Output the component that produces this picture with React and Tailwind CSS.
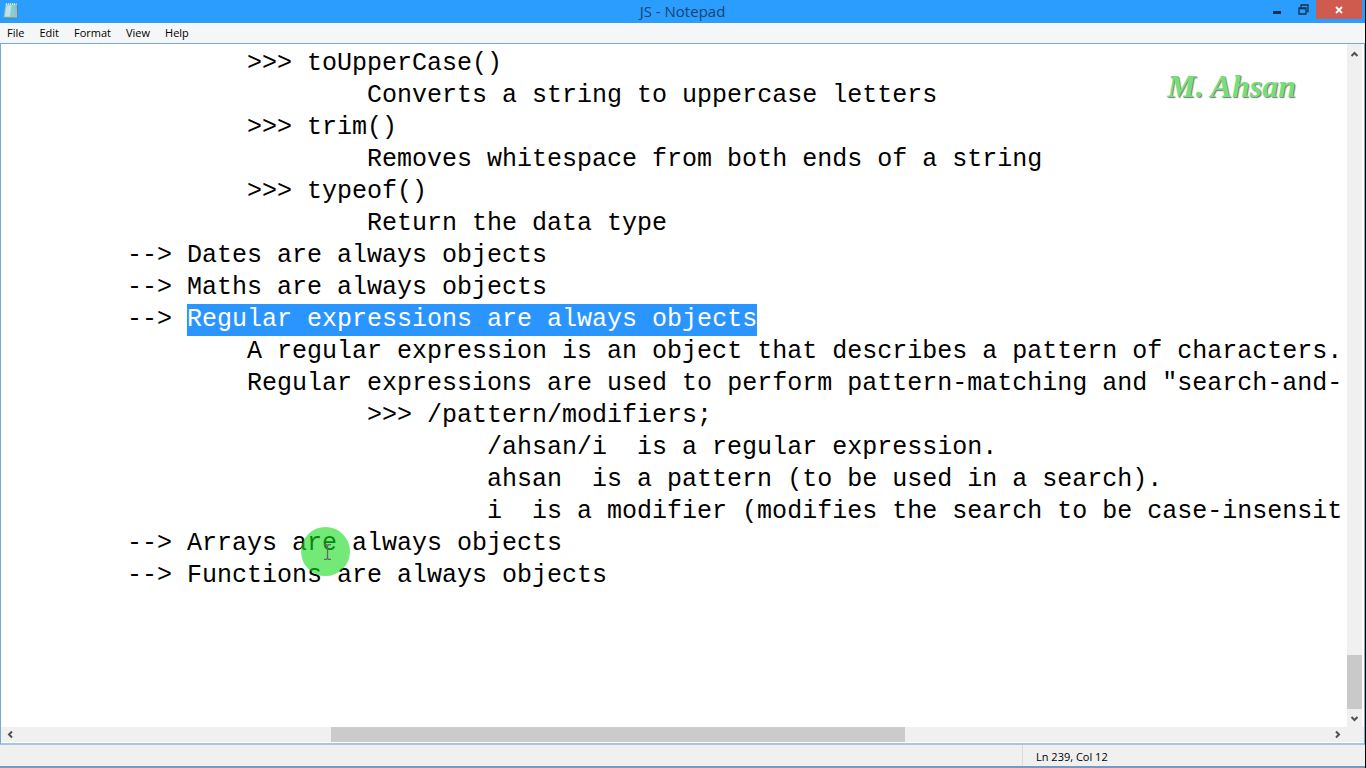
import { useEffect, useRef } from "react";

const SELECTED = "Regular expressions are always objects";

const TEXT = [
  "\t\t>>> toUpperCase()",
  "\t\t\tConverts a string to uppercase letters",
  "\t\t>>> trim()",
  "\t\t\tRemoves whitespace from both ends of a string",
  "\t\t>>> typeof()",
  "\t\t\tReturn the data type",
  "\t--> Dates are always objects",
  "\t--> Maths are always objects",
  "\t--> " + SELECTED,
  "\t\tA regular expression is an object that describes a pattern of characters.",
  "\t\tRegular expressions are used to perform pattern-matching and \"search-and-",
  "\t\t\t>>> /pattern/modifiers;",
  "\t\t\t\t/ahsan/i  is a regular expression.",
  "\t\t\t\tahsan  is a pattern (to be used in a search).",
  "\t\t\t\ti  is a modifier (modifies the search to be case-insensit",
  "\t--> Arrays are always objects",
  "\t--> Functions are always objects",
].join("\n");

const MENUS = ["File", "Edit", "Format", "View", "Help"];

const ARROWS = {
  up: "M1.5 6 4.5 3l3 3",
  down: "M1.5 3 4.5 6l3-3",
  left: "M6 1.5 3 4.5l3 3",
  right: "M3 1.5 6 4.5l-3 3",
};

function ScrollButton({ direction, className }) {
  return (
    <button
      type="button"
      aria-label={"Scroll " + direction}
      className={"flex shrink-0 items-center justify-center " + className}
    >
      <svg width="9" height="9" viewBox="0 0 9 9" fill="none" stroke="#505050" strokeWidth="2">
        <path d={ARROWS[direction]} />
      </svg>
    </button>
  );
}

function NotepadIcon() {
  return (
    <svg width="16" height="18" viewBox="0 0 16 18" aria-hidden="true">
      <path d="M3 2.500h11V16H3z" fill="#e9e6cf" />
      <path d="M2.500 2h10.700L12.500 15.500H.8z" fill="#8ecbd0" stroke="#6fb0c4" strokeWidth=".6" />
      <path d="M3.500 3.500h5L7 14.500H1.800z" fill="#bfe3e4" />
      <path d="M3 2h10.500" stroke="#e8f4f5" strokeWidth="1.400" strokeDasharray="1 1" />
      <path d="M14 3v13H2" fill="none" stroke="#5a7a5e" strokeWidth=".7" />
    </svg>
  );
}

function TitleBar() {
  return (
    <header className="grid h-[23px] shrink-0 grid-cols-[1fr_auto_1fr] items-start bg-[#2a9dff]">
      <div className="pt-[2px] pl-[3px]">
        <NotepadIcon />
      </div>
      <h1 className="text-[15px] leading-[23px] text-[#17456f]">JS - Notepad</h1>
      <div className="flex justify-end pr-[3px]">
        <button type="button" aria-label="Minimize" className="flex h-[19px] w-[26px] items-center justify-center">
          <svg width="10" height="10" viewBox="0 0 10 10"><path d="M1 6h8v3H1z" fill="#12324f" /></svg>
        </button>
        <button type="button" aria-label="Restore" className="flex h-[18px] w-[26px] items-center justify-center">
          <svg width="11" height="11" viewBox="0 0 11 11" fill="none" stroke="#12324f">
            <path d="M1 4h7v6H1zM1 4.700h7" strokeWidth="1.300" />
            <path d="M3 3.500V1h7v6.500H8.500" strokeWidth="1.300" />
          </svg>
        </button>
        <button type="button" aria-label="Close" className="flex h-[19px] w-[46px] items-center justify-center bg-[#cf5a4e]">
          <svg width="8" height="8" viewBox="0 0 8 8" stroke="#fff" strokeWidth="1.800"><path d="m1 1 6 6M7 1 1 7" /></svg>
        </button>
      </div>
    </header>
  );
}

export default function App() {
  const editor = useRef(null);

  useEffect(() => {
    const start = TEXT.indexOf(SELECTED);
    editor.current.focus({ preventScroll: true });
    editor.current.setSelectionRange(start, start + SELECTED.length);
  }, []);

  return (
    <div className="flex h-screen flex-col overflow-hidden border-r border-black bg-white font-['Open_Sans',sans-serif] text-black">
      <TitleBar />
      <nav className="flex h-[20px] shrink-0 gap-px bg-[#f5f6f7] text-[11px] leading-[20px]">
        {MENUS.map((name) => (
          <button key={name} type="button" className="px-[7px]">{name}</button>
        ))}
      </nav>
      <main className="relative flex min-h-0 flex-1 flex-col border border-b-2 border-[#75a8dc] border-b-[#a5c6e8]">
        <div className="flex min-h-0 flex-1">
          <textarea
            ref={editor}
            aria-label="Document text"
            wrap="off"
            spellCheck={false}
            defaultValue={TEXT}
            className="ml-[6px] min-w-0 flex-1 resize-none overflow-hidden pt-[4px] font-['Liberation_Mono',monospace] text-[25px] leading-[32px] [tab-size:8] outline-none selection:bg-[#2b95ff] selection:text-white"
          />
          <div className="mr-[2px] flex w-[15px] shrink-0 flex-col bg-[#f0f0f0]">
            <ScrollButton direction="up" className="h-[20px]" />
            <div className="flex-1" />
            <div className="h-[54px] bg-[#c9c9c9]" />
            <ScrollButton direction="down" className="h-[18px]" />
          </div>
        </div>
        <div className="mb-px flex h-[15px] shrink-0 bg-[#f0f0f0] pr-[18px]">
          <ScrollButton direction="left" className="w-[18px]" />
          <div className="flex flex-1">
            <div className="w-[23.8%]" />
            <div className="w-[43.9%] bg-[#cbcbcb]" />
          </div>
          <ScrollButton direction="right" className="w-[18px]" />
        </div>
        <div className="pointer-events-none absolute top-[26px] right-[68px] font-['Lucida_Calligraphy','Liberation_Serif',serif] text-[32px] leading-[32px] font-bold text-[#74e07c] italic [text-shadow:1px_1px_1px_#777]">
          M. Ahsan
        </div>
        <div className="pointer-events-none absolute top-[483px] left-[300px] flex size-[49px] items-center justify-center rounded-full bg-[#16dc1e]/60">
          <svg width="9" height="16" viewBox="0 0 9 16" fill="none" stroke="#666" strokeWidth="1.300" className="ml-[4px]" aria-hidden="true">
            <path d="M1 .7h2.500l1 1 1-1H8M4.500 1.500v13M1 15.300h2.500l1-1 1 1H8" />
          </svg>
        </div>
      </main>
      <footer className="flex h-[23px] shrink-0 justify-end border-b-2 border-[#6f9dc9] bg-[#f0f0f0] text-[11px] leading-[24px]">
        <div className="w-[343px] border-l border-[#dcdcdc] pl-[13px]">Ln 239, Col 12</div>
      </footer>
    </div>
  );
}
